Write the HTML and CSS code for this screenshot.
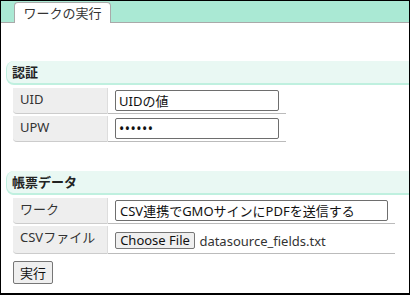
FILE: index.html
```html
<!DOCTYPE html>
<html lang="ja">
<head>
    <meta charset="UTF-8">
    <title>ワークの実行</title>
    <link rel="stylesheet" href="styles.css">
</head>
<body>
    <div class="tabs">
        <span class="tab">ワークの実行</span>
    </div>
    <div class="content">
        <h3 class="section">認証</h3>
        <table class="form">
            <tr>
                <th>UID</th>
                <td><input type="text" class="short" value="UIDの値"></td>
            </tr>
            <tr>
                <th>UPW</th>
                <td><input type="password" class="short pw" value="secret"></td>
            </tr>
        </table>

        <h3 class="section second">帳票データ</h3>
        <table class="form">
            <tr>
                <th>ワーク</th>
                <td><input type="text" class="long" value="CSV連携でGMOサインにPDFを送信する"></td>
            </tr>
            <tr>
                <th>CSVファイル</th>
                <td class="file-cell">
                    <button type="button" class="file-btn">Choose File</button>
                    <span class="file-name">datasource_fields.txt</span>
                </td>
            </tr>
        </table>

        <button type="button" class="run-btn">実行</button>
    </div>
</body>
</html>
```

FILE: styles.css
```css
html, body {
    margin: 0;
    padding: 0;
}
body {
    box-sizing: border-box;
    height: 295px;
    border: 1px solid #000;
    border-bottom-width: 2px;
    font-family: "Noto Sans", "Noto Sans CJK JP", sans-serif;
    font-size: 13px;
    color: #222;
    background-color: #fff;
    overflow: hidden;
}
.tabs {
    display: flex;
    align-items: flex-end;
    height: 21px;
    background-color: #aae9d4;
    border-bottom: 1px solid #a9a9a9;
}
.tab {
    box-sizing: border-box;
    width: 97px;
    height: 21px;
    margin: 0 0 -1px 13px;
    background-color: #fff;
    border: 1px solid #a9a9a9;
    border-bottom: none;
    border-radius: 4px 4px 0 0;
    color: #333;
    font-size: 13px;
    line-height: 20px;
    text-align: center;
}
.section {
    margin: 38px 0 0 5px;
    padding-left: 5px;
    height: 22px;
    line-height: 22px;
    font-size: 13px;
    font-weight: bold;
    color: #222;
    background-color: #e9f8f3;
    border-left: 1px solid #c0efdf;
    border-bottom: 2px solid #bff0df;
    border-radius: 8px 0 0 8px;
}
.section.second {
    margin-top: 27px;
}
.form {
    border-collapse: separate;
    border-spacing: 0 2px;
    margin: 1px 0 0 12px;
}
.form th {
    box-sizing: border-box;
    width: 95px;
    padding: 1px 7px 0;
    vertical-align: top;
    text-align: left;
    font-weight: normal;
    line-height: 20px;
    color: #333;
    background-color: #eee;
    border-right: 1px solid #ddd;
    border-bottom: 1px solid #ccc;
    border-radius: 0 0 0 4px;
}
.form td {
    padding: 2px 7px;
    border-bottom: 1px solid #bbb;
}
.form input {
    box-sizing: border-box;
    height: 21px;
    padding: 0 3px;
    border: 1px solid #6e6e6e;
    border-radius: 2px;
    font-family: inherit;
    font-size: 13px;
    color: #111;
}
.form input.short {
    width: 164px;
}
.form input.pw {
    font-size: 14px;
    letter-spacing: 0.5px;
}
.form input.long {
    width: 273px;
    padding-left: 4px;
}
.form td.file-cell {
    padding-top: 4px;
    padding-bottom: 3px;
}
.file-btn {
    box-sizing: border-box;
    height: 17px;
    width: 80px;
    padding: 0;
    font-family: inherit;
    font-size: 13px;
    line-height: 15px;
    color: #111;
    background-color: #efefef;
    border: 1px solid #767676;
    border-radius: 2px;
    vertical-align: middle;
}
.file-name {
    margin-left: 1px;
    color: #333;
    vertical-align: middle;
}
.run-btn {
    display: block;
    box-sizing: border-box;
    width: 40px;
    height: 23px;
    margin: 5px 0 0 12px;
    padding: 0;
    font-family: inherit;
    font-size: 13px;
    color: #111;
    background-color: #efefef;
    border: 1px solid #767676;
    border-radius: 2px;
}
```
